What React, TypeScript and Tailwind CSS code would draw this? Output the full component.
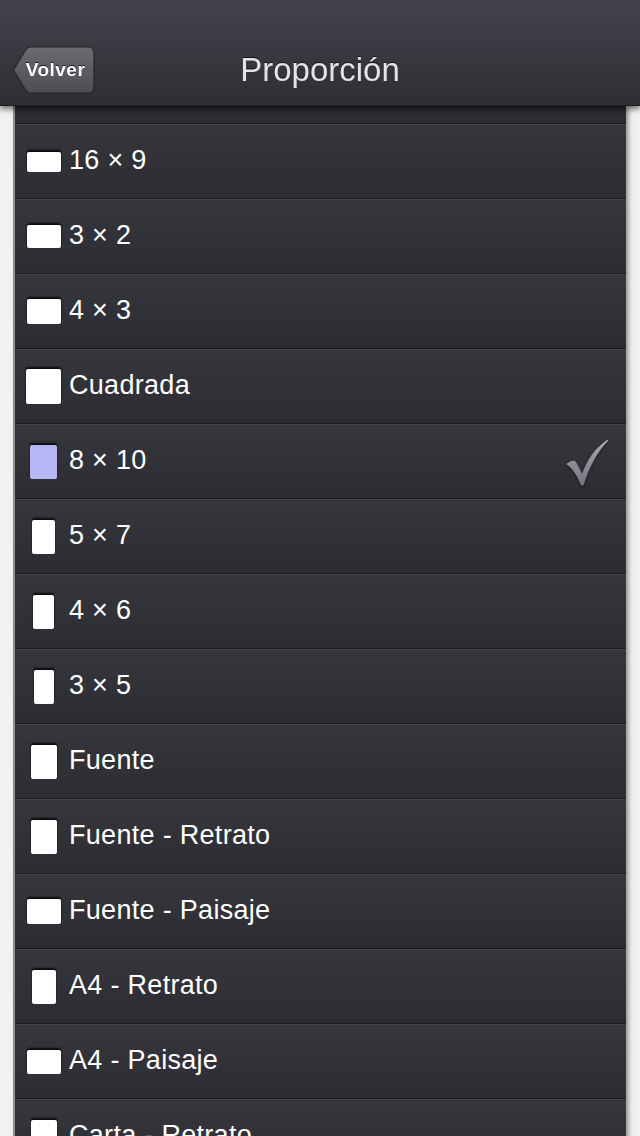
import React from 'react';

type Ratio = { label: string; w: number; h: number; selected?: boolean };

const ratios: Ratio[] = [
  { label: '16 × 9', w: 34, h: 20 },
  { label: '3 × 2', w: 34, h: 23 },
  { label: '4 × 3', w: 34, h: 25 },
  { label: 'Cuadrada', w: 35, h: 35 },
  { label: '8 × 10', w: 27, h: 34, selected: true },
  { label: '5 × 7', w: 23, h: 34 },
  { label: '4 × 6', w: 21, h: 34 },
  { label: '3 × 5', w: 20, h: 34 },
  { label: 'Fuente', w: 26, h: 34 },
  { label: 'Fuente - Retrato', w: 26, h: 34 },
  { label: 'Fuente - Paisaje', w: 34, h: 25 },
  { label: 'A4 - Retrato', w: 24, h: 34 },
  { label: 'A4 - Paisaje', w: 34, h: 24 },
  { label: 'Carta - Retrato', w: 26, h: 34 },
];

const font = { fontFamily: '"Helvetica Neue", "Liberation Sans", Arial, sans-serif' };

const Check = () => (
  <svg width="44" height="50" viewBox="0 0 44 50" className="drop-shadow-[0_1px_1px_rgba(0,0,0,0.6)]">
    <defs>
      <linearGradient id="chk" x1="0" y1="0" x2="0" y2="1">
        <stop offset="0" stopColor="#a9a9b4" />
        <stop offset="1" stopColor="#73737e" />
      </linearGradient>
    </defs>
    <path
      d="M1 26 C5 23 8 22 10 23 C12 25 15 31 17 36 C22 22 30 10 42 2 C43 1.5 43.5 2.5 43 3 C33 13 25 27 19 46 C18.5 48 16 48 15.5 46 C12 37 7 30 1 26 Z"
      fill="url(#chk)"
    />
  </svg>
);

const Row = ({ r }: { r: Ratio }) => (
  <div className="h-[75px] flex items-center border-t border-t-[#44444c] border-b border-b-[#1d1d21] bg-gradient-to-b from-[#36363d] to-[#2c2c32]">
    <div className="w-[55px] flex justify-center pl-[2px]">
      <div
        className={`rounded-[2px] shadow-[0_-2px_2px_rgba(0,0,0,0.8)] ${r.selected ? 'bg-[#b7b7f6]' : 'bg-white'}`}
        style={{ width: r.w, height: r.h }}
      />
    </div>
    <span className="text-[27px] tracking-[0.3px] text-white leading-none flex-1 -ml-[1px] pb-[3px]" style={font}>
      {r.label}
    </span>
    {r.selected && (
      <div className="pr-[17px] pt-[3px]">
        <Check />
      </div>
    )}
  </div>
);

export default function App() {
  return (
    <div className="w-[640px] h-[1136px] overflow-hidden bg-[#f1f1f1] relative" style={font}>
      {/* Nav bar */}
      <header className="relative z-10 h-[106px] bg-gradient-to-b from-[#43434c] to-[#2e2e35] shadow-[0_3px_6px_rgba(0,0,0,0.55)] border-b border-[#1c1c20]">
        <div className="h-full pt-[34px] flex items-center relative">
          <button className="absolute left-[12px] top-[46px] w-[83px] h-[48px] flex items-center justify-center">
            <svg width="83" height="48" viewBox="0 0 83 48" className="absolute inset-0">
              <defs>
                <linearGradient id="back" x1="0" y1="0" x2="0" y2="1">
                  <stop offset="0" stopColor="#6b6b73" />
                  <stop offset="1" stopColor="#4d4d54" />
                </linearGradient>
              </defs>
              <path
                d="M1.5 24 L14 3.5 Q15.5 1 19 1 L76 1 Q82 1 82 7 L82 41 Q82 47 76 47 L19 47 Q15.5 47 14 44.5 Z"
                fill="url(#back)"
                stroke="#26262b"
                strokeWidth="1.2"
              />
            </svg>
            <span className="relative text-[19px] font-bold tracking-[0.5px] text-white pl-[4px] drop-shadow-[0_-1px_0_rgba(0,0,0,0.7)]">
              Volver
            </span>
          </button>
          <h1 className="w-full text-center text-[33px] text-[#e4e4e6] drop-shadow-[0_-1px_0_rgba(0,0,0,0.6)]">
            Proporción
          </h1>
        </div>
      </header>

      {/* List panel */}
      <div className="ml-[13px] w-[613px] border-l-2 border-l-[#8d8d92] shadow-[3px_0_4px_rgba(0,0,0,0.35)] bg-[#2c2c32]">
        <div className="h-[18px] bg-gradient-to-b from-[#2a2a30] to-[#2e2e34] border-b border-b-[#1d1d21]" />
        {ratios.map((r) => (
          <Row key={r.label} r={r} />
        ))}
      </div>
    </div>
  );
}
